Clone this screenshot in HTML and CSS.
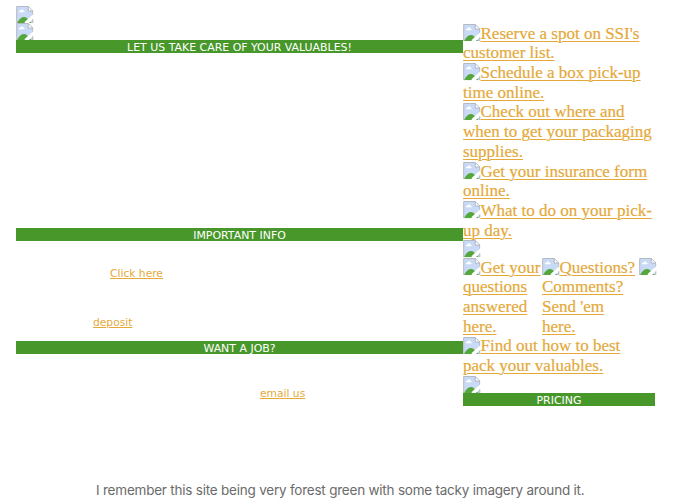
FILE: index.html
```html
<!DOCTYPE html>
<html lang="en">
<head>
<meta charset="utf-8">
<title>Valuables storage</title>
<link rel="stylesheet" href="styles.css">
</head>
<body>
<svg width="0" height="0" class="defs" aria-hidden="true">
  <symbol id="broken" viewBox="0 0 17 17">
    <path d="M.5 .5H12L16.500 5V9.500L9 17H.5Z" fill="#c9daf6"/>
    <path d="M2.500 6.200C2.500 4.900 4 4.800 4.300 4.300C5 3 7 3.200 7.300 4.700C8.600 4.700 8.800 6.200 7.800 6.200Z" fill="#fff"/>
    <path d="M.8 17C3 12.500 5.500 10.600 8 10.800C9.500 11 11 12 12 13.500L8.500 17Z" fill="#55a73c"/>
    <path d="M12 .5V5H16.500Z" fill="#fff"/>
    <path d="M.5 17V.5H12L16.500 5V8.500M12 .5V5H16.500" fill="none" stroke="#a9adb3" stroke-width=".8"/>
    <path d="M17 10L9 17" stroke="#fff" stroke-width="2.600"/>
    <path d="M12.500 17L17 12.800V17Z" fill="#c3d3e6"/>
    <path d="M12.500 17L14 15.600L15.200 17Z" fill="#55a73c"/>
    <path d="M16.600 13V17" stroke="#a9adb3" stroke-width=".8"/>
  </symbol>
</svg>
<main class="page">
  <svg class="icon"><use href="#broken"/></svg>
  <div class="columns">
    <section class="info">
      <svg class="icon"><use href="#broken"/></svg>
      <h2 class="bar">LET US TAKE CARE OF YOUR VALUABLES!</h2>
      <div class="space care"></div>
      <h2 class="bar">IMPORTANT INFO</h2>
      <div class="space important">
        <a class="small click" href="#">Click here</a>
        <a class="small deposit" href="#">deposit</a>
      </div>
      <h2 class="bar">WANT A JOB?</h2>
      <div class="space"><a class="small email" href="#">email us</a></div>
    </section>
    <nav class="links">
      <a href="#"><svg class="icon"><use href="#broken"/></svg>Reserve a spot on SSI's<br>customer list.</a>
      <a href="#"><svg class="icon"><use href="#broken"/></svg>Schedule a box pick-up<br>time online.</a>
      <a href="#"><svg class="icon"><use href="#broken"/></svg>Check out where and<br>when to get your packaging<br>supplies.</a>
      <a href="#"><svg class="icon"><use href="#broken"/></svg>Get your insurance form<br>online.</a>
      <a href="#"><svg class="icon"><use href="#broken"/></svg>What to do on your pick-<br>up day.</a>
      <svg class="icon"><use href="#broken"/></svg>
      <div class="trio">
        <a href="#"><svg class="icon"><use href="#broken"/></svg>Get your<br>questions<br>answered<br>here.</a>
        <a href="#"><svg class="icon"><use href="#broken"/></svg>Questions?<br>Comments?<br>Send 'em<br>here.</a>
        <svg class="icon"><use href="#broken"/></svg>
      </div>
      <a href="#"><svg class="icon"><use href="#broken"/></svg>Find out how to best<br>pack your valuables.</a>
      <svg class="icon"><use href="#broken"/></svg>
      <h2 class="bar">PRICING</h2>
    </nav>
  </div>
  <p class="caption">I remember this site being very forest green with some tacky imagery around it.</p>
</main>
</body>
</html>
```
FILE: styles.css
```css
body {
  margin: 0;
  background: #fff;
  overflow: hidden;
}
.defs { display: none; }
.page {
  height: 493px;
  padding: 6px 0 0 16px;
}
.icon {
  display: block;
  width: 17.5px;
  height: 17.2px;
}
.columns {
  display: grid;
  grid-template-columns: 447px 192px;
  height: 449px;
}
.bar {
  margin: 0;
  height: 13px;
  background: #47972a;
  color: #fff;
  font: 400 10.95px/15px "DejaVu Sans", sans-serif;
  text-align: center;
  white-space: nowrap;
}
.care { height: 175px; }
.important { height: 100px; }
.space { overflow: hidden; }
a {
  color: #e5a93a;
  text-decoration: underline;
  text-decoration-thickness: 1px;
}
.small {
  display: block;
  width: max-content;
  font: 10.7px/14px "DejaVu Sans", sans-serif;
}
.click { margin: 26px 0 0 94px; }
.deposit { margin: 35px 0 0 77px; }
.email { margin: 33px 0 0 244px; }
.links {
  padding-top: .4px;
  font: 17px/19.7px "Liberation Serif", serif;
  -webkit-text-stroke: .2px #e5a93a;
  white-space: nowrap;
}
.links .bar { margin-top: -.4px; -webkit-text-stroke: 0; }
.links a {
  display: block;
  text-underline-offset: 2px;
  text-decoration-thickness: 1.4px;
}
.links a .icon {
  display: inline-block;
  vertical-align: -.6px;
  margin: -2px 0;
}
.trio {
  display: grid;
  grid-template-columns: 79px 97px 17px;
}
.caption {
  margin: 9px 0 0 80px;
  color: #6b6b6b;
  font: 13.5px/18px Inter, sans-serif;
  letter-spacing: -.22px;
  white-space: nowrap;
}
```
